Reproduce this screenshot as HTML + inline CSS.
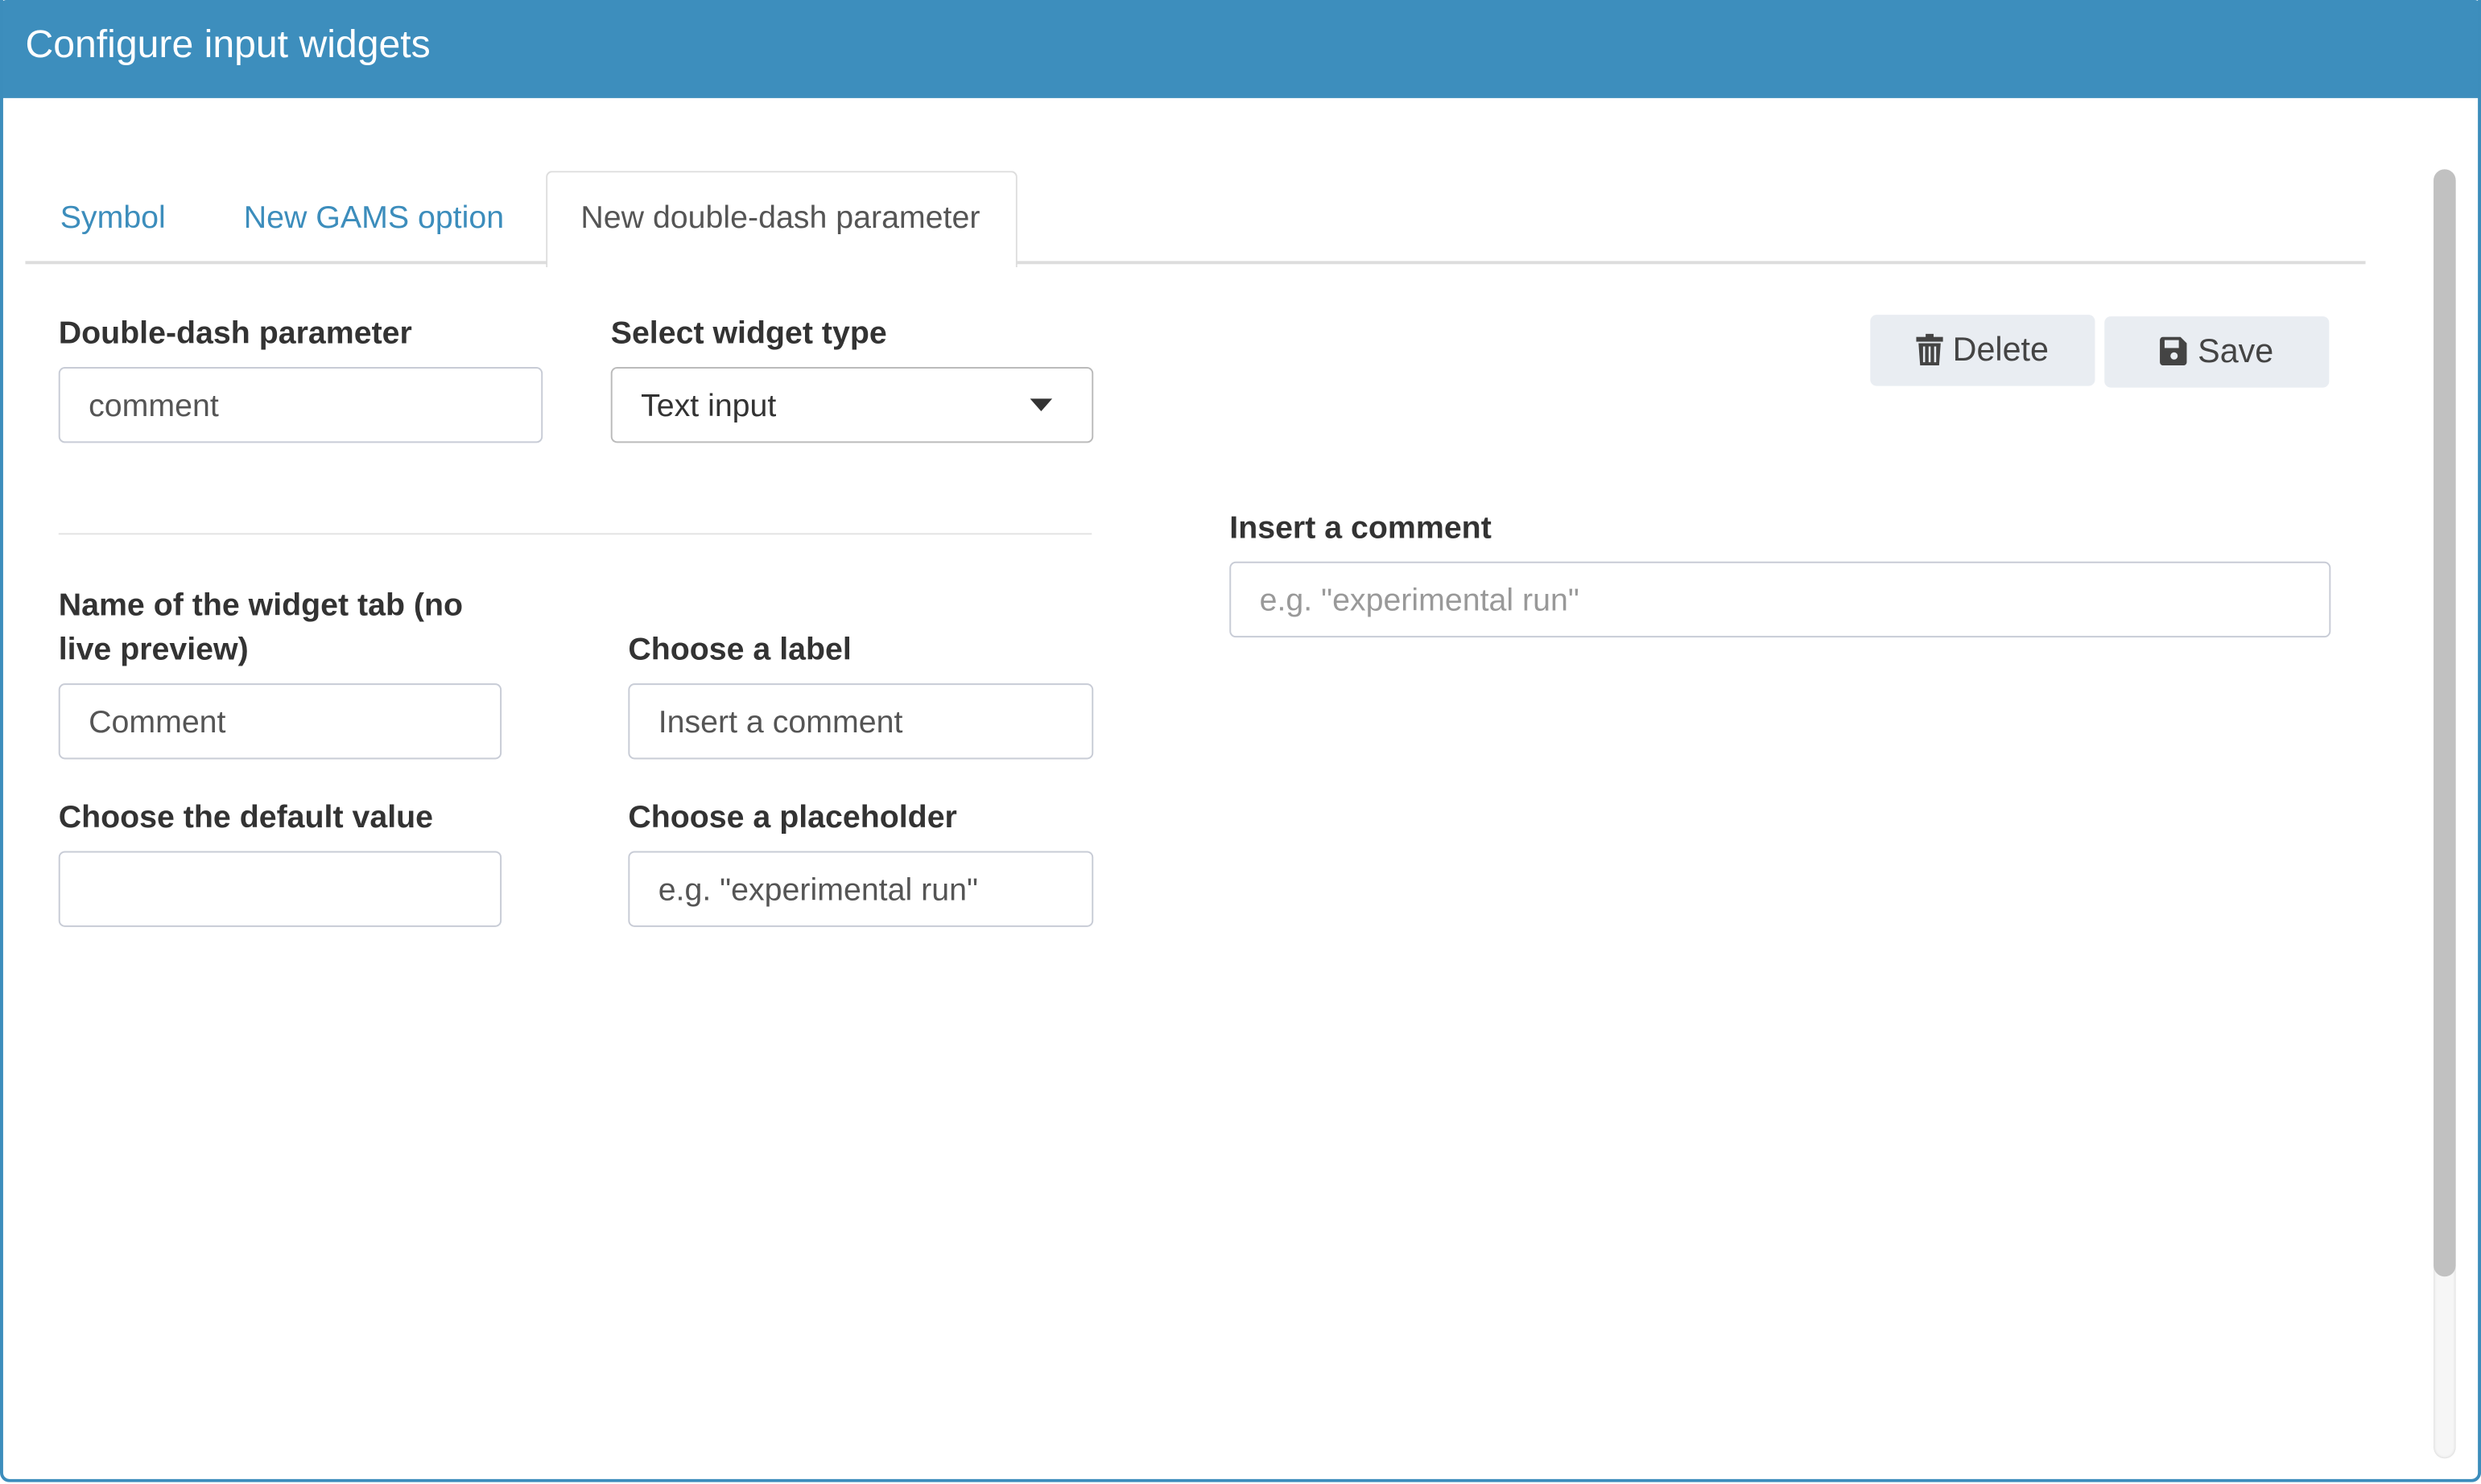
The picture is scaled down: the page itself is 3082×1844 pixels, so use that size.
<!DOCTYPE html>
<html><head><meta charset="utf-8"><style>
html,body{margin:0;padding:0;background:#fff;overflow:hidden}
#w{position:absolute;left:0;top:0;width:1568px;height:938px;transform:scale(1.9656);transform-origin:0 0;font-family:"Liberation Sans",sans-serif;}
.a{position:absolute}
.frame{left:0;top:0;width:1564px;height:935px;border:2px solid #3c8dbc;border-top:none;border-radius:0 0 6px 6px}
.hdr{left:0;top:0;width:1568px;height:62px;background:#3d8ebd;border-radius:4px 4px 0 0}
.ttl{left:16px;top:15px;color:#fff;font-size:24.5px}
.tab{font-size:20px;top:127px;color:#3c8dbc}
.lbl{font-weight:bold;font-size:20px;color:#333}
.inp{border:1px solid #c8ccd6;border-radius:4px;height:48px;box-sizing:border-box;font-size:20px;color:#555;padding-left:18px;line-height:48px}
.btn{background:#e9edf2;border-radius:4px;font-size:21px;color:#444;text-align:center;line-height:46px;height:45px}
</style></head><body><div id="w">
<div class="a hdr"></div>
<div class="a ttl">Configure input widgets</div>
<div class="a frame"></div>
<div class="a" style="left:16px;top:165px;width:1479px;height:2px;background:#ddd"></div>
<div class="a" style="left:345px;top:108px;width:296px;height:60px;border:1px solid #ddd;border-bottom:none;border-radius:4px 4px 0 0;background:#fff"></div>
<div class="a tab" style="left:38px">Symbol</div>
<div class="a tab" style="left:154px">New GAMS option</div>
<div class="a tab" style="left:367px;color:#555">New double-dash parameter</div>

<div class="a lbl" style="left:37px;top:200px">Double-dash parameter</div>
<div class="a inp" style="left:37px;top:232px;width:306px">comment</div>
<div class="a lbl" style="left:386px;top:200px">Select widget type</div>
<div class="a inp" style="left:386px;top:232px;width:305px;border-color:#bbb;color:#333">Text input</div>
<div class="a" style="left:651px;top:252px;width:0;height:0;border-left:7px solid transparent;border-right:7px solid transparent;border-top:8px solid #333"></div>

<div class="a btn" style="left:1182px;top:199px;width:142px"><svg width="17" height="20" viewBox="0 0 17 20" style="vertical-align:-3px"><rect x="0" y="2" width="17" height="3" fill="#444"/><rect x="6" y="0" width="5" height="3" fill="#444"/><path d="M1.5 6h14l-1 14h-12z" fill="#444"/><path d="M5 8v10M8.5 8v10M12 8v10" stroke="#e9edf2" stroke-width="1.3"/></svg> Delete</div>
<div class="a btn" style="left:1330px;top:200px;width:142px"><svg width="18" height="18" viewBox="0 0 18 18" style="vertical-align:-2px"><path d="M2 0h11l4 4v12a2 2 0 0 1-2 2H2a2 2 0 0 1-2-2V2a2 2 0 0 1 2-2z" fill="#444"/><rect x="3" y="2" width="9" height="5" fill="#e9edf2"/><circle cx="9" cy="12" r="2.3" fill="#e9edf2"/></svg> Save</div>

<div class="a" style="left:37px;top:337px;width:653px;height:1px;background:#e3e3e3"></div>
<div class="a lbl" style="left:37px;top:369px;line-height:28px">Name of the widget tab (no<br>live preview)</div>
<div class="a inp" style="left:37px;top:432px;width:280px">Comment</div>
<div class="a lbl" style="left:397px;top:400px">Choose a label</div>
<div class="a inp" style="left:397px;top:432px;width:294px">Insert a comment</div>
<div class="a lbl" style="left:37px;top:506px">Choose the default value</div>
<div class="a inp" style="left:37px;top:538px;width:280px"></div>
<div class="a lbl" style="left:397px;top:506px">Choose a placeholder</div>
<div class="a inp" style="left:397px;top:538px;width:294px">e.g. "experimental run"</div>

<div class="a lbl" style="left:777px;top:323px">Insert a comment</div>
<div class="a inp" style="left:777px;top:355px;width:696px;color:#999">e.g. "experimental run"</div>

<div class="a" style="left:1538px;top:107px;width:14px;height:815px;border-radius:7px;background:#f6f6f6;box-shadow:inset 0 0 2px #ccc"></div>
<div class="a" style="left:1538px;top:107px;width:14px;height:700px;border-radius:7px;background:#c1c1c1"></div>
</div></body></html>
